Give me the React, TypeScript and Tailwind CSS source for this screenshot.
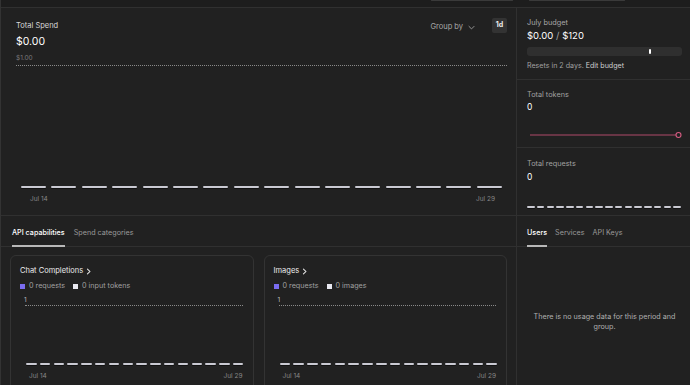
import React from 'react';

const font = { fontFamily: 'Inter, "Noto Sans", sans-serif' };

const Dashes = ({ count, w, className }: { count: number; w: string; className?: string }) => (
  <div className={`flex justify-between ${className ?? ''}`}>
    {Array.from({ length: count }).map((_, i) => (
      <div key={i} className={`${w} h-[2px] rounded-[1px] bg-[#c9c9d2] shadow-[0_1px_0_#111]`} />
    ))}
  </div>
);

const Dotted = ({ className }: { className?: string }) => (
  <div className={`border-t border-dotted border-[#8a8a8a] ${className ?? ''}`} />
);

const Chevron = () => (
  <svg width="7" height="7" viewBox="0 0 10 10" className="inline-block ml-[2px]">
    <path d="M3.5 1.5 L7 5 L3.5 8.5" stroke="#e6e6e6" strokeWidth="1.5" fill="none" strokeLinecap="round" />
  </svg>
);

interface UsageCardProps {
  title: string;
  second: string;
}

const UsageCard: React.FC<UsageCardProps> = ({ title, second }) => (
  <div className="border border-[#333] rounded-[6px] h-[140px] px-[9px] pt-[10px]">
    <div className="text-[7.5px] text-[#ececec] leading-[10px] flex items-center">
      {title}
      <Chevron />
    </div>
    <div className="mt-[5px] flex items-center gap-[8px] text-[7.2px] text-[#a0a0a0] leading-[10px]">
      <span className="flex items-center gap-[4px]">
        <span className="w-[5px] h-[5px] bg-[#7a6cf0] inline-block" />0 requests
      </span>
      <span className="flex items-center gap-[4px]">
        <span className="w-[5px] h-[5px] bg-[#e8e8f0] inline-block" />{second}
      </span>
    </div>
    <div className="mt-[5px] pl-[4px] text-[6.5px] text-[#bbb] leading-[8px]">1</div>
    <Dotted className="ml-[5px] mr-[1px] mt-[1px]" />
    <Dashes count={16} w="w-[10.5px]" className="ml-[6px] mt-[57px]" />
    <div className="flex justify-between pl-[9px] pr-[1px] mt-[7px] text-[6.5px] text-[#888] leading-[8px]">
      <span>Jul 14</span>
      <span>Jul 29</span>
    </div>
  </div>
);

const App: React.FC = () => {
  return (
    <div style={font} className="w-[690px] h-[385px] bg-[#212121] overflow-hidden flex flex-col border-l border-[#333]">
      {/* top strip */}
      <div className="h-[8px] shrink-0 bg-[#1d1d1d] border-b border-[#303030] flex justify-end pr-[65px] gap-[16px]">
        <div className="w-[82px] h-[1px] border-b border-x border-[#3a3a3a] rounded-b-[3px]" />
        <div className="w-[96px] h-[1px] border-b border-x border-[#3a3a3a] rounded-b-[3px]" />
      </div>

      <div className="flex flex-1 min-h-0">
        {/* left */}
        <div className="w-[516px] shrink-0 flex flex-col border-r border-[#303030]">
          <div className="h-[208px] shrink-0 border-b border-[#303030] pl-[15px] pr-[9px] pt-[13px]">
            <div className="flex justify-between items-start">
              <div>
                <div className="text-[7.5px] text-[#d8d8d8] leading-[10px]">Total Spend</div>
                <div className="text-[10.5px] text-white leading-[14px] mt-[4px]">$0.00</div>
              </div>
              <div className="flex items-center gap-[17px]">
                <div className="text-[7.5px] text-[#a8a8a8] flex items-center gap-[5px]">
                  Group by
                  <svg width="7" height="5" viewBox="0 0 10 6">
                    <path d="M1 1 L5 5 L9 1" stroke="#a8a8a8" strokeWidth="1.2" fill="none" />
                  </svg>
                </div>
                <div className="w-[15px] h-[15px] -mt-[3px] bg-[#333] rounded-[2px] text-[7px] font-bold text-[#eee] flex items-center justify-center">
                  1d
                </div>
              </div>
            </div>
            <div className="text-[6.5px] text-[#7a7a7a] leading-[8px] mt-[5px]">$1.00</div>
            <Dotted className="mt-[3px]" />
            <Dashes count={16} w="w-[25px]" className="ml-[5px] mr-[5px] mt-[120px]" />
            <div className="flex justify-between pl-[14px] pr-[12px] mt-[7px] text-[6.5px] text-[#888] leading-[8px]">
              <span>Jul 14</span>
              <span>Jul 29</span>
            </div>
          </div>

          <div className="h-[31px] shrink-0 border-b border-[#303030] flex items-end gap-[9px] px-[11px]">
            <div className="text-[7.2px] text-white font-medium pb-[7px] border-b-2 border-[#b8b8b8] leading-[10px] -mb-[1px]">
              API capabilities
            </div>
            <div className="text-[7.2px] text-[#9a9a9a] pb-[8px] leading-[10px]">Spend categories</div>
          </div>

          <div className="grid grid-cols-2 gap-[10px] px-[9px] pt-[8px]">
            <UsageCard title="Chat Completions" second="0 input tokens" />
            <UsageCard title="Images" second="0 images" />
          </div>
        </div>

        {/* right */}
        <div className="flex-1 flex flex-col rounded-br-[6px]">
          <div className="h-[72px] shrink-0 border-b border-[#303030] px-[10px] pt-[10px]">
            <div className="text-[7.3px] text-[#a8a8a8] leading-[10px]">July budget</div>
            <div className="text-[9.5px] text-white leading-[12px] mt-[2px]">
              $0.00 <span className="text-[#a8a8a8]">/</span> $120
            </div>
            <div className="mt-[5px] h-[9px] rounded-[3px] bg-[#2f2f2f] relative">
              <div className="absolute left-[122px] top-[2px] w-[2px] h-[5px] bg-white rounded-[1px]" />
            </div>
            <div className="text-[7.1px] text-[#a0a0a0] leading-[10px] mt-[5px]">
              Resets in 2 days. <span className="text-[#d0d0d0]">Edit budget</span>
            </div>
          </div>

          <div className="h-[68px] shrink-0 border-b border-[#303030] px-[10px] pt-[10px]">
            <div className="text-[7.3px] text-[#a0a0a0] leading-[10px]">Total tokens</div>
            <div className="text-[8.5px] text-white leading-[12px] mt-[1px]">0</div>
            <svg width="153" height="8" viewBox="0 0 153 8" className="mt-[18px] ml-[2px]">
              <line x1="1" y1="4" x2="147" y2="4" stroke="#b04a6a" strokeWidth="1.2" />
              <circle cx="149.5" cy="4" r="2.5" stroke="#d65c82" strokeWidth="1.1" fill="#212121" />
            </svg>
          </div>

          <div className="h-[68px] shrink-0 border-b border-[#303030] px-[10px] pt-[11px]">
            <div className="text-[7.3px] text-[#a0a0a0] leading-[10px]">Total requests</div>
            <div className="text-[8.5px] text-white leading-[12px] mt-[2px]">0</div>
            <Dashes count={16} w="w-[7.5px]" className="mt-[23px] mr-[1px]" />
          </div>

          <div className="h-[31px] shrink-0 border-b border-[#303030] flex items-end gap-[8px] px-[10px]">
            <div className="text-[7.2px] text-white font-medium pb-[7px] border-b-2 border-[#b8b8b8] leading-[10px] -mb-[1px]">
              Users
            </div>
            <div className="text-[7.2px] text-[#9a9a9a] pb-[8px] leading-[10px]">Services</div>
            <div className="text-[7.2px] text-[#9a9a9a] pb-[8px] leading-[10px]">API Keys</div>
          </div>

          <div className="flex-1 flex items-center justify-center px-[14px] pt-[12px]">
            <div className="text-[7.2px] text-[#b0b0b0] leading-[10px] text-center">
              There is no usage data for this period and group.
            </div>
          </div>
        </div>
      </div>
    </div>
  );
};

export default App;
